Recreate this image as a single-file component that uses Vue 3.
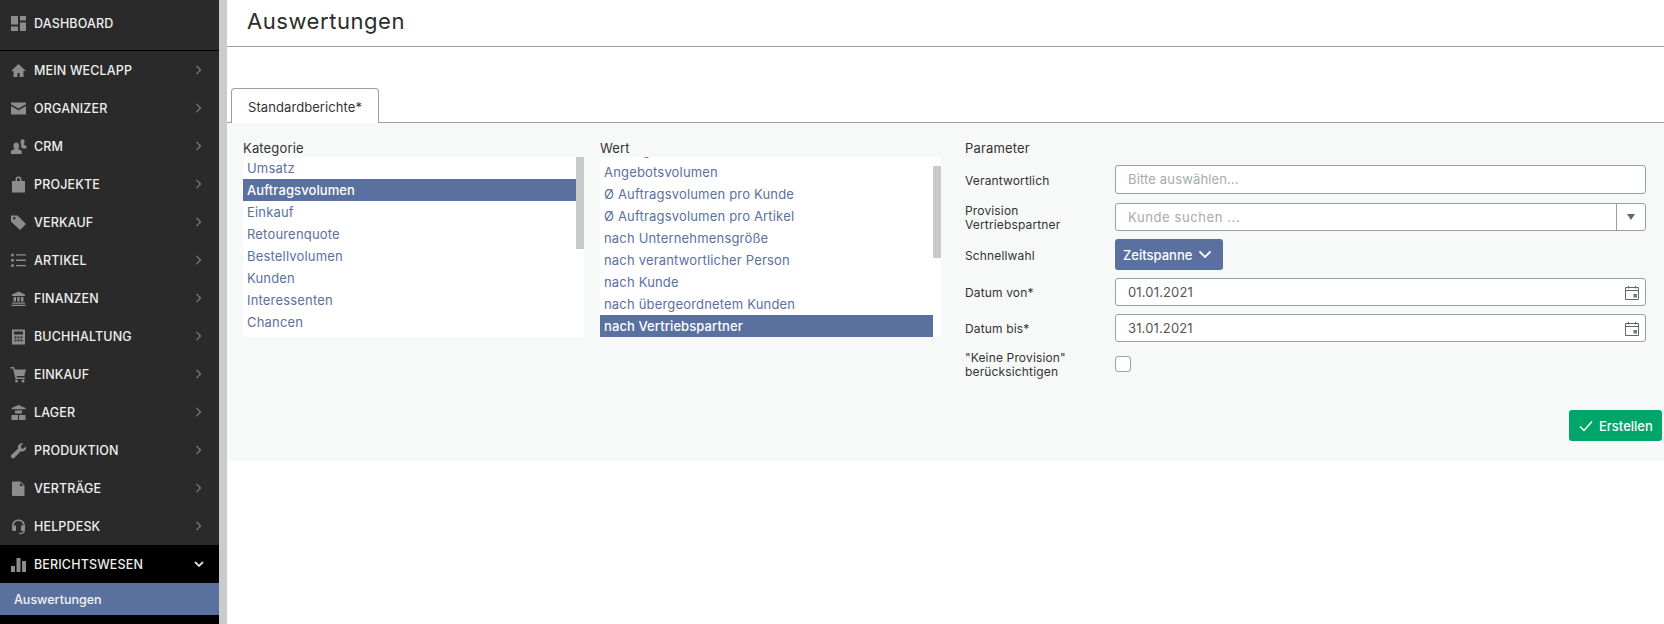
<script setup>
const menu = [
  { label: 'MEIN WECLAPP', icon: 'home' },
  { label: 'ORGANIZER', icon: 'mail' },
  { label: 'CRM', icon: 'crm' },
  { label: 'PROJEKTE', icon: 'bag' },
  { label: 'VERKAUF', icon: 'tag' },
  { label: 'ARTIKEL', icon: 'list' },
  { label: 'FINANZEN', icon: 'bank' },
  { label: 'BUCHHALTUNG', icon: 'calc' },
  { label: 'EINKAUF', icon: 'cart' },
  { label: 'LAGER', icon: 'store' },
  { label: 'PRODUKTION', icon: 'wrench' },
  { label: 'VERTRÄGE', icon: 'doc' },
  { label: 'HELPDESK', icon: 'head' }
]
const icons = {
  home: 'M8.500 2 1 9h2.500v6h3.900v-4h2.200v4h3.900V9H16z',
  mail: 'M1 2.500h15v1.700L8.500 8.500 1 4.200zM1 6l7.500 4.300L16 6v8.500H1z',
  crm: 'M6 4.500a3.200 3.200 0 0 1 3.200 3.500c0 1.300-.6 2.500-1.400 3.100 2 .5 3.400 1.200 3.900 2V16H1v-2.900c.5-.8 1.900-1.500 3.900-2-.8-.6-1.400-1.800-1.400-3.100A3.200 3.200 0 0 1 6 4.500zM12 1a2.700 2.700 0 0 1 2 4.500c-.3.500-.3.900 0 1.200l2.500 1.300v2.500H13L11 9.300c.4-1 .5-3-.6-4.500.3-1.300.5-2.500 1.600-3.800z',
  bag: 'M5.500 5V3.500a3 3 0 0 1 6 0V5H15v11.500H2V5zM7 5h3V3.500a1.500 1.500 0 0 0-3 0z',
  tag: 'M1 1.500h6.500L16 10l-6 6-9-8.500zM4.300 3a1.300 1.300 0 1 0 0 2.600 1.300 1.300 0 0 0 0-2.600z',
  list: 'M2.500 1.500a1.500 1.500 0 1 1 0 3 1.500 1.500 0 0 1 0-3zM6 2.300h10v1.300H6zM2.500 6.800a1.500 1.500 0 1 1 0 3 1.500 1.500 0 0 1 0-3zM6 7.600h10v1.300H6zM2.500 12a1.500 1.500 0 1 1 0 3 1.500 1.500 0 0 1 0-3zM6 12.900h10v1.300H6z',
  bank: 'M8.500 1.500 15 4.500V6H2V4.500zM3.500 7H6v4.500H3.500zM7.300 7h2.400v4.500H7.300zM11 7h2.500v4.500H11zM2 12.500h13v1.200H2zM1.500 14.800h14V16h-14z',
  calc: 'M2 1.500h13v15H2zM4 3.500v3h9v-3zM4.500 8.500v1.800h2V8.500zM7.500 8.500v1.800h2V8.500zM10.500 8.500v1.800h2V8.500zM4.500 11.500v1.800h2v-1.800zM7.500 11.500v1.800h2v-1.800zM10.500 11.500v1.800h2v-1.800z',
  cart: 'M.5 1H4l.8 2.500H16l-1.800 6.500H6.500l.5 1.500h7.800V13H5.500L3 2.500H.5zM6.500 13.500a1.500 1.500 0 1 1 0 3 1.500 1.500 0 0 1 0-3zM13 13.500a1.500 1.500 0 1 1 0 3 1.500 1.500 0 0 1 0-3z',
  store: 'M8.500 1 15.500 4v1.300h-14V4zM5 6.500h7V9.500H5zM1.500 11h6.500v5H1.500zM9 11h6.500v5H9z',
  wrench: 'M16 4.200c.4 1.800 0 3.300-1.200 4.300-1.100 1-2.500 1.200-4 .8L4.500 15.800c-.9.800-2.200.8-3 0-.8-.9-.8-2.100 0-3l6.600-6.300c-.4-1.500-.1-3 1-4.100C10.200 1.300 11.700.900 13.300 1.300L10.800 4l.4 2.200 2.200.5z',
  doc: 'M3 1.500h7.500L14.500 5.500V16H3a1 1 0 0 1-1-1V2.500a1 1 0 0 1 1-1zM10 2.500v3.500h3.500z',
  head: 'M8.500 1.500c3.800 0 6.500 2.700 6.500 6.500v3.500c0 2.800-1.300 4.500-3.500 4.500H9v-1.300h2.500c1 0 1.700-.5 2-1.700H11V7.500h2.400C13 5 11.200 3 8.500 3S4 5 3.600 7.500H6V13H3.500C2.600 13 2 12.200 2 11V8c0-3.800 2.700-6.500 6.500-6.500z'
}
const kategorie = ['Umsatz', 'Auftragsvolumen', 'Einkauf', 'Retourenquote', 'Bestellvolumen', 'Kunden', 'Interessenten', 'Chancen']
const wert = ['Auftragsvolumen', 'Angebotsvolumen', 'Ø Auftragsvolumen pro Kunde', 'Ø Auftragsvolumen pro Artikel', 'nach Unternehmensgröße', 'nach verantwortlicher Person', 'nach Kunde', 'nach übergeordnetem Kunden', 'nach Vertriebspartner']
</script>

<template>
  <div class="app">
    <aside class="sidebar">
      <div class="dash">
        <svg class="ico" viewBox="0 0 17 17"><path d="M1 1h7v8.500H1zM10 1h6v4.500h-6zM10 7.500h6v8.500h-6zM1 11.500h7v4.500H1z" /></svg>
        <span>DASHBOARD</span>
      </div>
      <nav>
        <div v-for="m in menu" :key="m.label" class="item">
          <svg class="ico" viewBox="0 0 17 17"><path :d="icons[m.icon]" fill-rule="evenodd" /></svg>
          <span class="lbl">{{ m.label }}</span>
          <svg class="chev" viewBox="0 0 8 10"><path d="M1.500 1 5.500 5l-4 4" /></svg>
        </div>
        <div class="item open">
          <svg class="ico" viewBox="0 0 17 17"><path d="M1 10h4v6H1zM6.500 2h4v14h-4zM12 5h4v11h-4z" /></svg>
          <span class="lbl">BERICHTSWESEN</span>
          <svg class="chev down" viewBox="0 0 10 8"><path d="M1 2l4 4 4-4" /></svg>
        </div>
        <div class="sub">Auswertungen</div>
      </nav>
    </aside>
    <div class="gutter"></div>
    <main class="main">
      <header class="head"><h1>Auswertungen</h1></header>
      <div class="tabs"><div class="tab">Standardberichte*</div></div>
      <section class="panel">
        <div class="cols">
          <div class="col">
            <div class="cap">Kategorie</div>
            <div class="box">
              <div class="rows">
                <div v-for="k in kategorie" :key="k" class="row" :class="{ sel: k === 'Auftragsvolumen' }">{{ k }}</div>
              </div>
              <div class="thumb t1"></div>
            </div>
          </div>
          <div class="col">
            <div class="cap">Wert</div>
            <div class="box">
              <div class="rows shifted">
                <div v-for="k in wert" :key="k" class="row" :class="{ sel: k === 'nach Vertriebspartner' }">{{ k }}</div>
              </div>
              <div class="thumb t2"></div>
            </div>
          </div>
          <div class="params">
            <div class="ptitle">Parameter</div>
            <div class="pr r1">
              <label>Verantwortlich</label>
              <div class="input ph">Bitte auswählen...</div>
            </div>
            <div class="pr r2">
              <label>Provision<br />Vertriebspartner</label>
              <div class="input ph combo"><span class="ctext">Kunde suchen ...</span><span class="arrow"><i></i></span></div>
            </div>
            <div class="pr r3">
              <label>Schnellwahl</label>
              <div class="zeit">Zeitspanne
                <svg viewBox="0 0 14 9"><path d="M1.500 1.500 7 7l5.500-5.500" /></svg>
              </div>
            </div>
            <div class="pr r4">
              <label>Datum von*</label>
              <div class="input date"><span>01.01.2021</span>
                <svg class="cal" viewBox="0 0 14 15"><path d="M.5 2.500h13v12H.5zM.5 5.500h13" /><path d="M3.500 1v2.500M10.500 1v2.500" /><rect x="8.500" y="9" width="3.500" height="3.500" /></svg>
              </div>
            </div>
            <div class="pr r5">
              <label>Datum bis*</label>
              <div class="input date"><span>31.01.2021</span>
                <svg class="cal" viewBox="0 0 14 15"><path d="M.5 2.500h13v12H.5zM.5 5.500h13" /><path d="M3.500 1v2.500M10.500 1v2.500" /><rect x="8.500" y="9" width="3.500" height="3.500" /></svg>
              </div>
            </div>
            <div class="pr r6">
              <label>"Keine Provision"<br />berücksichtigen</label>
              <div class="check"></div>
            </div>
          </div>
        </div>
        <div class="actions">
          <div class="create">
            <svg viewBox="0 0 14 12"><path d="M1 6.500 5 10.500 13 1.500" /></svg>
            Erstellen
          </div>
        </div>
      </section>
    </main>
  </div>
</template>

<style>
html, body { margin: 0; background: #fff; overflow: hidden; }
</style>

<style scoped>
.app {
  display: flex;
  width: 1664px;
  height: 624px;
  overflow: hidden;
  font-family: Inter, "Liberation Sans", sans-serif;
  color: #333;
}
.sidebar { width: 219px; flex: none; background: #2a2a2a; color: #eee; font-size: 12.500px; font-weight: 500; letter-spacing: .15px; }
.dash {
  height: 50px; display: flex; align-items: center; padding: 0 0 4px 10px; box-sizing: border-box;
  gap: 7px;
}
nav { border-top: 1px solid #000; background: #000; height: 573px; }
.item { height: 38px; background: #2a2a2a; display: flex; align-items: center; padding-left: 10px; gap: 7px; }
.ico { width: 17px; height: 17px; flex: none; fill: #8c8c8c; }
.lbl { flex: 1; }
.chev { width: 8px; height: 10px; margin-right: 16px; fill: none; stroke: #777; stroke-width: 1.300; }
.open { background: #000; }
.chev.down { width: 10px; height: 8px; margin-right: 15px; stroke: #ddd; stroke-width: 1.800; }
.sub { height: 32px; background: #5a71a0; color: #f2f2f2; font-size: 12.500px; font-weight: 500; line-height: 34px; padding-left: 14px; letter-spacing: 0; }
.gutter { width: 8px; flex: none; background: #cbcbcb; }
.main { flex: 1; min-width: 0; }
.head { height: 46px; border-bottom: 1px solid #97a2a0; padding-left: 20px; }
.head h1 { margin: 0; font-size: 22px; line-height: 43px; font-weight: 400; color: #2c2c2c; letter-spacing: .55px; }
.tabs { height: 76px; display: flex; align-items: flex-end; padding-left: 4px; box-sizing: border-box; border-bottom: 1px solid #97a2a0; }
.tab {
  width: 148px; height: 35px; box-sizing: border-box; border: 1px solid #97a2a0; border-bottom: 0;
  border-radius: 4px 4px 0 0; background: #fff; font-size: 13px; line-height: 36px; padding-left: 16px;
  margin-bottom: -1px; color: #333; letter-spacing: .08px;
}
.panel { background: #f7f9f8; height: 338px; box-sizing: border-box; }
.cols { display: flex; padding: 0 18px 0 16px; }
.col { width: 341px; margin-right: 16px; flex: none; }
.cap { height: 34px; padding-top: 16px; box-sizing: border-box; font-size: 13px; line-height: 18px; color: #333; letter-spacing: .15px; }
.box { position: relative; height: 180px; background: #fff; overflow: hidden; }
.rows { margin-right: 8px; }
.rows.shifted { margin-top: -18px; }
.row { height: 22px; line-height: 22px; padding-left: 4px; font-size: 13px; letter-spacing: .18px; color: #5a71a0; white-space: nowrap; }
.row.sel { background: #5a71a0; color: #fff; font-weight: 500; letter-spacing: .1px; }
.thumb { position: absolute; right: 0; width: 8px; height: 92px; background: #c9c9c9; }
.t1 { top: 0; }
.t2 { top: 9px; }
.params { flex: 1; margin-left: 8px; font-size: 12px; color: #333; letter-spacing: .15px; }
.ptitle { font-size: 13px; height: 34px; padding-top: 16px; box-sizing: border-box; line-height: 18px; }
.pr { display: grid; grid-template-columns: 150px 1fr; align-items: center; }
.pr label { line-height: 14px; position: relative; top: 1px; }
.input {
  height: 28px; box-sizing: border-box; border: 1px solid #97a2a0; border-radius: 3px; background: #fff;
  padding-left: 12px; line-height: 27px; font-size: 13px; color: #555; letter-spacing: .15px;
}
.ph { color: #a5adac; }
.r1 { margin-top: 8px; }
.r1 .input { height: 29px; }
.r2 { margin-top: 9px; }
.combo { display: flex; padding-right: 0; }
.ctext { flex: 1; letter-spacing: .6px; }
.arrow { width: 28px; border-left: 1px solid #97a2a0; display: flex; align-items: center; justify-content: center; }
.arrow i { width: 0; height: 0; border-left: 4px solid transparent; border-right: 4px solid transparent; border-top: 6px solid #666; }
.r3 { margin-top: 8px; }
.zeit {
  width: 108px; height: 31px; box-sizing: border-box; background: #5a71a0; border-radius: 3px; color: #fff;
  font-size: 13px; font-weight: 500; display: flex; align-items: center; padding-left: 8px; gap: 6px; letter-spacing: 0;
}
.zeit svg { width: 14px; height: 9px; fill: none; stroke: #fff; stroke-width: 1.800; }
.r4 { margin-top: 8px; }
.r5 { margin-top: 8px; }
.date { display: flex; justify-content: space-between; align-items: center; padding-right: 6px; }
.cal { width: 14px; height: 15px; fill: none; stroke: #666; stroke-width: 1; }
.cal rect { fill: #777; stroke: none; }
.r6 { margin-top: 8px; height: 30px; }
.r6 label { top: 0; }
.check { width: 16px; height: 16px; box-sizing: border-box; border: 1px solid #97a2a0; border-radius: 3px; background: #fff; margin-top: -3px; }
.actions { display: flex; justify-content: flex-end; padding: 0 2px 0 0; margin-top: 30px; }
.create {
  width: 93px; height: 31px; box-sizing: border-box; background: #00a56a; border-radius: 3px; color: #fff;
  font-size: 13px; font-weight: 500; display: flex; align-items: center; gap: 6px; padding-left: 10px;
}
.create svg { width: 14px; height: 12px; fill: none; stroke: #fff; stroke-width: 1.500; }
</style>
